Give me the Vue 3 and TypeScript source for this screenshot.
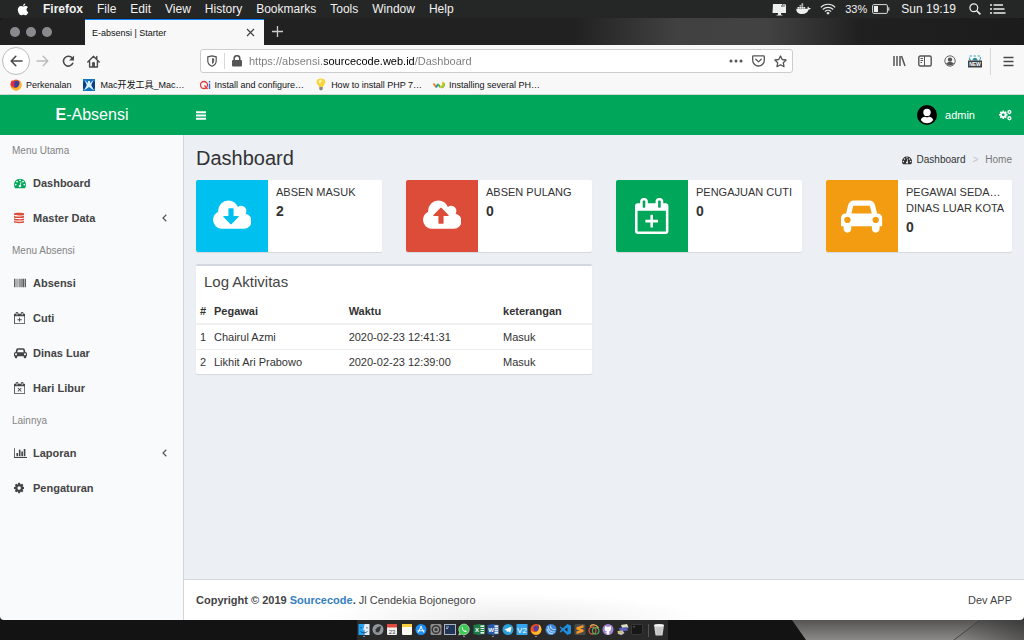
<script setup lang="ts">
import { ref } from 'vue'

interface Glyph {
  box: string
  d: string
}

const calendar =
  'M1536 256q52 0 90 38t38 90v1280q0 52-38 90t-90 38h-1408q-52 0-90-38t-38-90v-1280q0-52 38-90t90-38h128v-96q0-66 47-113t113-47h64q66 0 113 47t47 113v96h384v-96q0-66 47-113t113-47h64q66 0 113 47t47 113v96h128zm-384-96v288q0 14 9 23t23 9h64q14 0 23-9t9-23v-288q0-14-9-23t-23-9h-64q-14 0-23 9t-9 23zm-768 0v288q0 14 9 23t23 9h64q14 0 23-9t9-23v-288q0-14-9-23t-23-9h-64q-14 0-23 9t-9 23zm1152 1504v-1024h-1408v1024h1408z'
const cloud =
  'm640 288q0 159-112.5 271.5t-271.5 112.5h-1088q-185 0-316.5-131.5t-131.5-316.5q0-130 70-240t188-165q-2-30-2-43 0-212 150-362t362-150q156 0 285.5 87t188.5 231q71-62 166-62 106 0 181 75t75 181q0 76-41 138 130 31 213.5 135.5t83.5 238.5z'

const glyphs: Record<string, Glyph> = {
  dashboard: {
    box: '0 0 1792 1792',
    d: 'M384 1152q0-53-37.5-90.5t-90.5-37.5-90.5 37.5-37.5 90.5 37.5 90.5 90.5 37.5 90.5-37.5 37.5-90.5zm192-448q0-53-37.5-90.5t-90.5-37.5-90.5 37.5-37.5 90.5 37.5 90.5 90.5 37.5 90.5-37.5 37.5-90.5zm428 481l101-382q6-26-7.5-48.5t-38.5-29.5-48 6.5-30 39.5l-101 382q-60 5-107 43.5t-63 98.5q-20 77 20 146t117 89 146-20 89-117q16-60-6-117t-72-91zm660-33q0-53-37.5-90.5t-90.5-37.5-90.5 37.5-37.5 90.5 37.5 90.5 90.5 37.5 90.5-37.5 37.5-90.5zm-640-640q0-53-37.5-90.5t-90.5-37.5-90.5 37.5-37.5 90.5 37.5 90.5 90.5 37.5 90.5-37.5 37.5-90.5zm448 192q0-53-37.5-90.5t-90.5-37.5-90.5 37.5-37.5 90.5 37.5 90.5 90.5 37.5 90.5-37.5 37.5-90.5zm320 448q0 261-141 483-19 29-54 29h-1402q-35 0-54-29-141-221-141-483 0-182 71-348t191-286 286-191 348-71 348 71 286 191 191 286 71 348z'
  },
  database: {
    box: '0 0 1536 1792',
    d: 'M0 256C0 85 1536 85 1536 256V384C1536 555 0 555 0 384zM0 554C300 730 1236 730 1536 554V768C1536 939 0 939 0 768zM0 938C300 1114 1236 1114 1536 938V1152C1536 1323 0 1323 0 1152zM0 1322C300 1498 1236 1498 1536 1322V1536C1536 1707 0 1707 0 1536z'
  },
  barcode: {
    box: '0 0 1792 1792',
    d: 'M0 256h128v1280H0zM192 256h60v1280h-60zM320 256h60v1280h-60zM500 256h60v1280h-60zM700 256h130v1280H700zM900 256h60v1280h-60zM1030 256h60v1280h-60zM1150 256h130v1280h-130zM1350 256h130v1280h-130zM1540 256h60v1280h-60zM1664 256h128v1280h-128z'
  },
  calendarPlus: {
    box: '0 0 1664 1792',
    d: calendar + 'm-640-576h224q14 0 23 9t9 23v64q0 14-9 23t-23 9h-224v224q0 14-9 23t-23 9h-64q-14 0-23-9t-9-23v-224h-224q-14 0-23-9t-9-23v-64q0-14 9-23t23-9h224v-224q0-14 9-23t23-9h64q14 0 23 9t9 23z'
  },
  calendarTimes: {
    box: '0 0 1664 1792',
    d: calendar + 'M620 850L832 1060L1044 850L1134 940L922 1152L1134 1364L1044 1454L832 1242L620 1454L530 1364L742 1152L530 940z'
  },
  car: {
    box: '0 0 2048 1792',
    d: 'M480 1088q0-66-47-113t-113-47-113 47-47 113 47 113 113 47 113-47 47-113zm36-320h1016l-89-357q-2-8-14-17.5t-21-9.5h-768q-9 0-21 9.5t-14 17.5zm1372 320q0-66-47-113t-113-47-113 47-47 113 47 113 113 47 113-47 47-113zm160-96v384q0 14-9 23t-23 9h-96v128q0 80-56 136t-136 56-136-56-56-136v-128h-1024v128q0 80-56 136t-136 56-136-56-56-136v-128h-96q-14 0-23-9t-9-23v-384q0-93 65.5-158.5t158.5-65.5h28l105-419q23-94 104-157.5t179-63.5h768q98 0 179 63.5t104 157.5l105 419h28q93 0 158.5 65.5t65.5 158.5z'
  },
  chart: {
    box: '0 0 2048 1792',
    d: 'M640 896v512h-256v-512h256zm384-512v1024h-256v-1024h256zm1024 1152v128h-2048v-1536h128v1408h1920zm-640-896v768h-256v-768h256zm384-384v1152h-256v-1152h256z'
  },
  cog: {
    box: '128 0 1536 1792',
    d: 'M1152 896q0-106-75-181t-181-75-181 75-75 181 75 181 181 75 181-75 75-181zm512-109v222q0 12-8 23t-20 13l-185 28q-19 54-39 91 35 50 107 138 10 12 10 25t-9 23q-27 37-99 108t-94 71q-12 0-26-9l-138-108q-44 23-91 38-16 136-29 186-7 28-36 28h-222q-14 0-24.5-8.5t-11.5-21.5l-28-184q-49-16-90-37l-141 107q-10 9-25 9-14 0-25-11-126-114-165-168-7-10-7-23 0-12 8-23 15-21 51-66.5t54-70.5q-27-50-41-99l-183-27q-13-2-21-12.5t-8-23.5v-222q0-12 8-23t19-13l186-28q14-46 39-92-40-57-107-138-10-12-10-24 0-10 9-23 26-36 98.5-107.5t94.5-71.5q13 0 26 10l138 107q44-23 91-38 16-136 29-186 7-28 36-28h222q14 0 24.5 8.5t11.5 21.5l28 184q49 16 90 37l142-107q9-9 24-9 13 0 25 10 129 119 165 170 7 8 7 22 0 12-8 23-15 21-51 66.5t-54 70.5q26 50 41 98l183 28q13 2 21 12.5t8 23.5z'
  },
  cloudDown: {
    box: '0 0 1920 1792',
    d: 'M1280 928q0-14-9-23t-23-9h-224v-352q0-13-9.5-22.5t-22.5-9.5h-192q-13 0-22.5 9.5t-9.5 22.5v352h-224q-13 0-22.5 9.5t-9.5 22.5q0 14 9 23l352 352q9 9 23 9t23-9l351-351q10-12 10-24zm0-64' + cloud
  },
  cloudUp: {
    box: '0 0 1920 1792',
    d: 'M1280 864q0-14-9-23l-352-352q-9-9-23-9t-23 9l-351 351q-10 12-10 24 0 14 9 23t23 9h224v352q0 13 9.5 22.5t22.5 9.5h192q13 0 22.5-9.5t9.5-22.5v-352h224q13 0 22.5-9.5t9.5-22.5z' + cloud
  }
}

const appMenus = ['File', 'Edit', 'View', 'History', 'Bookmarks', 'Tools', 'Window', 'Help']
const address = ref('https://absensi.sourcecode.web.id/Dashboard')

interface Item {
  label: string
  icon: string
  tone?: string
  tree?: boolean
}
const sections: { title: string; items: Item[] }[] = [
  {
    title: 'Menu Utama',
    items: [
      { label: 'Dashboard', icon: 'dashboard', tone: 'green' },
      { label: 'Master Data', icon: 'database', tone: 'red', tree: true }
    ]
  },
  {
    title: 'Menu Absensi',
    items: [
      { label: 'Absensi', icon: 'barcode' },
      { label: 'Cuti', icon: 'calendarPlus' },
      { label: 'Dinas Luar', icon: 'car' },
      { label: 'Hari Libur', icon: 'calendarTimes' }
    ]
  },
  {
    title: 'Lainnya',
    items: [
      { label: 'Laporan', icon: 'chart', tree: true },
      { label: 'Pengaturan', icon: 'cog' }
    ]
  }
]

const cards = [
  { lines: ['Absen Masuk'], value: 2, icon: 'cloudDown', tone: 'aqua' },
  { lines: ['Absen Pulang'], value: 0, icon: 'cloudUp', tone: 'brick' },
  { lines: ['Pengajuan Cuti'], value: 0, icon: 'calendarPlus', tone: 'leaf' },
  { lines: ['Pegawai Seda…', 'Dinas Luar Kota'], value: 0, icon: 'car', tone: 'amber' }
]

const logs = [
  { name: 'Chairul Azmi', time: '2020-02-23 12:41:31', note: 'Masuk' },
  { name: 'Likhit Ari Prabowo', time: '2020-02-23 12:39:00', note: 'Masuk' }
]
</script>

<template>
  <div class="screen">
    <header class="menubar">
      <button class="apple" aria-label="Apple menu">
        <svg width="12" height="13" viewBox="0 0 12 13"><path fill="#fff" d="M8.3.4c.1 1.2-1 2.5-2.2 2.5C6 1.700 7.100.5 8.300.4zM6.200 3.500c.5 0 1.200-.6 2.300-.6 1 0 1.900.5 2.400 1.300-2 1.200-1.700 4 .4 4.800-.5 1.500-1.500 3.300-2.700 3.300-.9 0-1.200-.5-2.200-.5s-1.400.5-2.200.5C2.600 12.300.8 9.200.8 6.800c0-2.500 1.600-3.800 3.100-3.800 1 0 1.800.5 2.300.5z" /></svg>
      </button>
      <button class="current">Firefox</button>
      <button v-for="m in appMenus" :key="m">{{ m }}</button>
      <div class="status">
        <svg width="15" height="13" viewBox="0 0 15 13"><path fill="#eee" d="M1 1h9.500L9 3.500l3 .5 2-3v9H9v1.500l2 1H4l2-1V10H.5z" /><path fill="#aaa" d="M11 1h3l-2 3-2.500-.5z" /></svg>
        <svg width="15" height="12" viewBox="0 0 15 12"><path fill="#eee" d="M.3 5.800h10.500c.7 0 1-.6.7-1.600l.6-.7c.6.5.8 1 .9 1.500.7-.1 1.300 0 1.800.3-.4.9-1.100 1.200-2.100 1.200-1 2.800-3 4.600-6.500 4.600C2.500 11.100.2 9.500.3 5.800zM1.500 4h1.700v1.400H1.500zM3.500 4h1.700v1.400H3.500zM5.500 4h1.700v1.400H5.500zM7.500 4h1.700v1.400H7.500zM3.500 2.200h1.700v1.400H3.500zM5.500 2.200h1.700v1.400H5.500zM5.500.4h1.700v1.400H5.500z" /></svg>
        <svg width="16" height="12" viewBox="0 0 16 12"><g fill="none" stroke="#e6e6e6" stroke-width="1.200"><path d="M.8 4.300a10 10 0 0 1 14.400 0M2.800 6.500a7.200 7.200 0 0 1 10.400 0M4.900 8.600a4.400 4.400 0 0 1 6.200 0" /></g><path fill="#eee" d="M6.300 9.900a2.400 2.400 0 0 1 3.400 0L8 11.800z" /></svg>
        <span class="charge">33%</span>
        <svg width="18" height="10" viewBox="0 0 18 10"><rect x=".6" y=".6" width="14.800" height="8.800" rx="1.200" fill="none" stroke="#ddd" /><path fill="#eee" d="M2 2h4v6H2zM16.300 3.200h1v3.600h-1z" /></svg>
        <span class="clock">Sun 19:19</span>
        <svg width="12" height="12" viewBox="0 0 12 12"><g fill="none" stroke="#eee" stroke-width="1.200"><circle cx="4.800" cy="4.800" r="3.900" /><path d="M7.700 7.700l3.700 3.700" stroke-width="1.600" /></g></svg>
        <svg width="16" height="10" viewBox="0 0 16 10"><path stroke="#eee" stroke-width="1.500" d="M0 1h2M0 5h2M0 9h2M3.500 1H13M3.500 5h11M3.500 9h12" /></svg>
      </div>
    </header>

    <div class="window">
      <div class="tabstrip">
        <span class="lights"><i></i><i></i><i></i></span>
        <div class="tab">
          <span>E-absensi | Starter</span>
          <button aria-label="Close tab"><svg width="9" height="9" viewBox="0 0 9 9"><path stroke="#444" stroke-width="1.200" d="M1 1l7 7M8 1L1 8" /></svg></button>
        </div>
        <button class="newtab" aria-label="New tab"><svg width="11" height="11" viewBox="0 0 11 11"><path stroke="#ccc" stroke-width="1.300" d="M5.500 0v11M0 5.500h11" /></svg></button>
      </div>

      <div class="toolbar">
        <button class="back" aria-label="Back"><svg width="13" height="12" viewBox="0 0 13 12"><path fill="none" stroke="#484848" stroke-width="1.600" stroke-linecap="round" stroke-linejoin="round" d="M12 6H1.200M5.800 1.300L1.200 6l4.600 4.700" /></svg></button>
        <button aria-label="Forward"><svg width="13" height="12" viewBox="0 0 13 12"><path fill="none" stroke="#bbb" stroke-width="1.400" stroke-linecap="round" stroke-linejoin="round" d="M1 6h10.800M7.200 1.300L11.800 6l-4.600 4.700" /></svg></button>
        <button class="reload" aria-label="Reload"><svg width="13" height="12" viewBox="0 0 13 12"><path fill="none" stroke="#4a4a4a" stroke-width="1.600" d="M10.500 3.500A4.900 4.900 0 1 0 11 7.800" /><path fill="#4a4a4a" d="M12 .5v5H7z" /></svg></button>
        <button class="home" aria-label="Home"><svg width="13" height="13" viewBox="0 0 13 13"><g fill="none" stroke="#4a4a4a" stroke-width="1.400" stroke-linecap="round" stroke-linejoin="round"><path d="M.8 7L6.500 1.200 12.200 7M2.600 6.500V12h7.800V6.500M9.800 3.500V1.500" /></g><path fill="#4a4a4a" d="M5.100 12V8.300c0-1.600 2.800-1.600 2.800 0V12z" /></svg></button>
        <div class="urlbar">
          <svg width="10" height="12" viewBox="0 0 10 12"><path fill="none" stroke="#555" stroke-width="1.200" d="M5 .8l4.200 1V6c0 2.500-1.600 4.200-4.200 5.300C2.400 10.200.8 8.500.8 6V1.800z" /><path fill="#666" d="M5 3l2.200.5V6c0 1.300-.8 2.200-2.200 3z" /></svg>
          <i class="rule"></i>
          <svg width="10" height="12" viewBox="0 0 10 12"><path fill="none" stroke="#555" stroke-width="1.600" d="M2.200 6V3.500a2.800 2.800 0 0 1 5.600 0V6" /><rect y="5" width="10" height="6.500" rx="1" fill="#555" /></svg>
          <input v-model="address" aria-label="Address" type="text" spellcheck="false" />
          <button aria-label="Page actions"><svg width="14" height="4" viewBox="0 0 14 4"><g fill="#555"><circle cx="2" cy="2" r="1.500" /><circle cx="7" cy="2" r="1.500" /><circle cx="12" cy="2" r="1.500" /></g></svg></button>
          <button aria-label="Save to Pocket"><svg width="13" height="12" viewBox="0 0 13 12"><g fill="none" stroke="#555" stroke-width="1.300" stroke-linecap="round" stroke-linejoin="round"><path d="M1.500.8h10c.5 0 .8.3.8.8v3.600a5.800 5.800 0 0 1-11.600 0V1.600c0-.5.3-.8.800-.8z" /><path d="M3.800 4.300l2.700 2.600 2.700-2.600" /></g></svg></button>
          <button aria-label="Bookmark this page"><svg width="13" height="13" viewBox="0 0 13 13"><path fill="none" stroke="#555" stroke-width="1.300" stroke-linejoin="round" d="M6.500 1l1.700 3.500 3.900.5-2.800 2.700.7 3.900-3.500-1.900L3 11.600l.7-3.900L.9 5l3.900-.5z" /></svg></button>
        </div>
        <div class="tools">
          <button aria-label="Library"><svg width="13" height="12" viewBox="0 0 13 12"><path stroke="#555" stroke-width="1.500" d="M1 1v10M4 1v10M7 1v10M8.500 1l3.500 10" /></svg></button>
          <button aria-label="Sidebars"><svg width="14" height="12" viewBox="0 0 14 12"><rect x=".8" y="1" width="12.400" height="10" rx="1.500" fill="none" stroke="#555" stroke-width="1.400" /><path stroke="#555" d="M6.500 1v10M2.500 3.500H5M2.500 5.500H5M2.500 7.500H4" /></svg></button>
          <button aria-label="Account"><svg width="12" height="12" viewBox="0 0 12 12"><circle cx="6" cy="6" r="5.200" fill="none" stroke="#666" /><circle cx="6" cy="4.600" r="2.200" fill="#555" /><path fill="#555" d="M2 8.600c1.500-2.300 6.500-2.300 8 0-1.800 2.500-6.200 2.500-8 0z" /></svg></button>
          <button aria-label="New feature"><svg width="14" height="13" viewBox="0 0 14 13"><path fill="none" stroke="#49a9b5" stroke-width="1.200" stroke-dasharray="2.500 1.500" d="M1.500 5V1h11v4" /><path fill="#2e8c9c" d="M4.500 5.500c0-3.600 5-3.600 5 0zM2 4.500h1v1H2zM11 4.500h1v1h-1z" /><rect y="5.500" width="14" height="7" fill="#3c4146" /><text x="7" y="11" font-size="5" font-weight="700" text-anchor="middle" fill="#fff">NEW</text></svg></button>
          <i class="rule tall"></i>
          <button aria-label="Open menu"><svg width="11" height="11" viewBox="0 0 11 11"><path stroke="#484848" stroke-width="1.500" d="M.5 1.500h10M.5 5.500h10M.5 9.500h10" /></svg></button>
        </div>
      </div>

      <nav class="bookmarks" aria-label="Bookmarks">
        <a href="#">
          <svg width="12" height="12" viewBox="0 0 12 12"><circle cx="6" cy="6" r="5.400" fill="#f25a1e" /><circle cx="6.600" cy="5.200" r="3.400" fill="#3b3fa0" /><path fill="#ffb52b" d="M9 .8c3.500 2.700 3.400 7.800.3 9.800C6 12.500 1.500 11 .8 7c2 2.500 5 2.600 6.700 1.200C9.500 6.500 10 4 9 .8z" /><path fill="#e52b3c" d="M.7 6.500C.2 4 1.200 2 2.300 1l.4 1.600L5 3 3.800 5l1.400 1.500-2 .8z" /></svg>
          Perkenalan
        </a>
        <a href="#">
          <svg width="12" height="12" viewBox="0 0 12 12"><rect width="12" height="12" fill="#1673bd" /><path fill="#0b3f85" d="M0 3l2-1 2 4-2 4-2-1zM12 3l-2-1-2 4 2 4 2-1z" /><path fill="#d9f1ff" d="M1.500 1L5 4.200V2h2v2.200L10.500 1 8.200 6l2.800 5.500L6 8l-5 3.500L3.800 6z" /></svg>
          <span class="indent">Mac开发工具_Mac…</span>
        </a>
        <a href="#">
          <svg width="12" height="12" viewBox="0 0 12 12"><circle cx="5" cy="6" r="3.500" fill="none" stroke="#e13a3a" stroke-width="1.300" /><path stroke="#e13a3a" stroke-width="1.300" d="M5.500 6.500l3 3.500" /><path stroke="#3c62c8" stroke-width="1.400" d="M10.500 4.500V10M10.500 2v1.500" /></svg>
          Install and configure…
        </a>
        <a href="#">
          <svg width="12" height="13" viewBox="0 0 12 13"><path fill="#f8d43a" d="M6 .5c5.500 0 5 4.700 3 6.500L7.800 9H4.200L3 7C1 5.200.5.500 6 .5z" /><path fill="#fff4a8" d="M4.500 2c1.500-1 2.500 0 2 2L5 6C3.500 5 3.300 3 4.500 2z" /><path fill="#888" d="M4.300 9h3.400v2.500L6 12.500l-1.700-1z" /></svg>
          How to install PHP 7…
        </a>
        <a href="#">
          <svg width="12" height="12" viewBox="0 0 12 12"><g fill="none" stroke-width="1.800"><path stroke="#ef7a2a" d="M.5 4.500L3 8" /><path stroke="#2a8fb5" d="M3 8.500l2-3.500" /><path stroke="#5cb531" d="M5 5l2.500 3.500" /><path stroke="#e7c51d" d="M7.500 8.500C10 7 10.500 5 9.500 3" /><path stroke="#8cc63e" d="M8.500 8.500c3 0 3-3 2.500-4.500" /></g></svg>
          Installing several PH…
        </a>
      </nav>

      <div class="page">
        <header class="topbar">
          <a class="brand" href="#"><b>E</b>-Absensi</a>
          <button class="burger" aria-label="Toggle navigation"><svg width="10" height="9" viewBox="0 0 10 9"><path stroke="#fff" stroke-width="2" d="M0 1.200h10M0 4.500h10M0 7.800h10" /></svg></button>
          <div class="account">
            <a class="user" href="#">
              <svg width="20" height="20" viewBox="0 0 20 20"><circle cx="10" cy="10" r="10" fill="#000" /><circle cx="10" cy="7.400" r="3.700" fill="#fff" /><path fill="#fff" d="M3.800 15c.6-2.500 2.600-3.200 4.300-3.200 1.200.7 2.600.7 3.800 0 1.700 0 3.700.7 4.300 3.200-1.300 2-3.600 3.300-6.200 3.300S5.100 17 3.800 15z" /></svg>
              admin
            </a>
            <button aria-label="Settings">
              <svg width="13" height="12" viewBox="0 0 1920 1792" fill="#fff" fill-rule="evenodd">
                <path :d="glyphs.cog.d" transform="translate(-104 128) scale(.82)" />
                <path :d="glyphs.cog.d" transform="translate(1150 50) scale(.44)" />
                <path :d="glyphs.cog.d" transform="translate(1150 980) scale(.44)" />
              </svg>
            </button>
          </div>
        </header>

        <div class="body">
          <aside class="sidebar">
            <nav v-for="s in sections" :key="s.title" :aria-label="s.title">
              <h2>{{ s.title }}</h2>
              <a v-for="i in s.items" :key="i.label" href="#">
                <span class="slot"><svg :class="i.tone" height="12" :viewBox="glyphs[i.icon].box"><path :d="glyphs[i.icon].d" /></svg></span>
                <span class="label">{{ i.label }}</span>
                <svg v-if="i.tree" width="5" height="8" viewBox="0 0 5 8"><path fill="none" stroke="#555" stroke-width="1.200" d="M4.300.8L1 4l3.300 3.200" /></svg>
              </a>
            </nav>
          </aside>

          <div class="main">
            <main>
              <div class="heading">
                <h1>Dashboard</h1>
                <nav class="crumbs" aria-label="Breadcrumb">
                  <a href="#"><svg width="10" height="10" :viewBox="glyphs.dashboard.box"><path :d="glyphs.dashboard.d" /></svg>Dashboard</a>
                  <i>&gt;</i>
                  <span>Home</span>
                </nav>
              </div>

              <section class="cards">
                <article v-for="c in cards" :key="c.lines[0]" class="card">
                  <span class="tile" :class="c.tone"><svg height="36" :viewBox="glyphs[c.icon].box"><path :d="glyphs[c.icon].d" /></svg></span>
                  <div class="info">
                    <p v-for="l in c.lines" :key="l">{{ l }}</p>
                    <strong>{{ c.value }}</strong>
                  </div>
                </article>
              </section>

              <section class="box">
                <h3>Log Aktivitas</h3>
                <table>
                  <thead>
                    <tr><th class="num">#</th><th class="who">Pegawai</th><th class="when">Waktu</th><th>keterangan</th></tr>
                  </thead>
                  <tbody>
                    <tr v-for="(l, n) in logs" :key="l.time">
                      <td>{{ n + 1 }}</td><td>{{ l.name }}</td><td>{{ l.time }}</td><td>{{ l.note }}</td>
                    </tr>
                  </tbody>
                </table>
              </section>
            </main>

            <footer class="foot">
              <span><b>Copyright © 2019 <a href="#">Sourcecode</a>.</b> Jl Cendekia Bojonegoro</span>
              <span>Dev APP</span>
            </footer>
          </div>
        </div>
      </div>
    </div>

    <div class="desktop">
      <svg class="wallpaper" viewBox="0 0 1024 20" preserveAspectRatio="none">
        <defs>
          <linearGradient id="stone" x1="0" y1="0" x2="0" y2="1"><stop offset="0" stop-color="#555453" /><stop offset="1" stop-color="#8b8988" /></linearGradient>
          <linearGradient id="edge" x1="0" y1="0" x2="1" y2="0"><stop offset="0" stop-color="#222" stop-opacity="0" /><stop offset="1" stop-color="#222" stop-opacity=".5" /></linearGradient>
        </defs>
        <rect width="1024" height="20" fill="#131313" />
        <path d="M792 0h232v20H806z" fill="url(#stone)" />
        <path d="M980 0L954 20" stroke="#444" />
        <path d="M980 0h44v20h-70z" fill="url(#edge)" />
      </svg>
      <div class="dock">
        <div class="apps">
          <svg viewBox="0 0 12 14"><path fill="#23a3f5" d="M.5 1h6L5 7h1.500V12h-6z" /><path fill="#e3edf5" d="M6.500 1h5v11h-5V7H5z" /><path fill="none" stroke="#123a66" stroke-width=".8" d="M3 4v1.500M9 4v1.500M2.500 8.500c2 1.800 5 1.800 7 0" /><circle cx="6" cy="13.400" r=".6" fill="#ddd" /></svg>
          <svg viewBox="0 0 12 14"><circle cx="6" cy="6.500" r="5.500" fill="#909699" /><path fill="#30353a" d="M9 3L5.500 4.200 3 7l1 .5-.5 2 2-.5.5 1L8 7.500z" /></svg>
          <svg viewBox="0 0 12 14"><rect x="1" y="1" width="10" height="11" rx="1" fill="#f2f0ee" /><path fill="#e2493f" d="M1 1h10v3.500H1z" /><text x="6" y="10.500" font-size="6" text-anchor="middle" fill="#444">23</text></svg>
          <svg viewBox="0 0 12 14"><rect x="1" y="1" width="10" height="11" rx="1" fill="#fbfaf0" /><path fill="#f7cf3f" d="M1 1h10v3H1z" /></svg>
          <svg viewBox="0 0 12 14"><circle cx="6" cy="6.500" r="5.500" fill="#1c8df2" /><path stroke="#e8f6ff" stroke-width="1.100" d="M6.500 3L3 9.500M5.500 3L9 9.500M2.500 7.800h7" /></svg>
          <svg viewBox="0 0 12 14"><rect x=".5" y="1" width="11" height="11" rx="1.500" fill="#8e8e8e" /><circle cx="6" cy="6.500" r="3.800" fill="none" stroke="#333" stroke-width="1.400" /><circle cx="6" cy="6.500" r="1.500" fill="#333" /></svg>
          <svg viewBox="0 0 12 14"><rect x=".5" y="1.500" width="11" height="10" fill="#22365a" stroke="#a8b4c2" /><path stroke="#d5dce5" stroke-width=".7" d="M2 4h3M2 5.500h2" /></svg>
          <svg viewBox="0 0 12 14"><path fill="#3bc953" stroke="#dff5e2" stroke-width=".6" d="M6 1a5.400 5.400 0 1 1-2.600 10.200L.8 12l.8-2.700A5.400 5.400 0 0 1 6 1z" /><path fill="#fff" d="M4 3.500l1.200 1.700-.6.8 1.800 1.800.8-.6 1.600 1.100C8 10.500 3 7.500 4 3.500z" /><circle cx="6" cy="13.400" r=".6" fill="#ddd" /></svg>
          <svg viewBox="0 0 12 14"><path fill="#e4efe8" stroke="#218452" stroke-width=".6" d="M6 2h5.500v9H6z" /><path stroke="#218452" d="M7 4.500h4M7 6.500h4M7 8.500h4" /><path fill="#1d7b49" d="M.5 2L7.500.8v11.400L.5 11z" /><text x="4" y="9" font-size="6" font-weight="700" text-anchor="middle" fill="#fff">X</text></svg>
          <svg viewBox="0 0 12 14"><path fill="#e3ebf5" stroke="#2b5eaa" stroke-width=".6" d="M6 2h5.500v9H6z" /><path stroke="#789ac9" d="M7 4.500h4M7 6.500h4M7 8.500h4" /><path fill="#2459a8" d="M.5 2L7.500.8v11.400L.5 11z" /><text x="4" y="9" font-size="6" font-weight="700" text-anchor="middle" fill="#fff">W</text><circle cx="6" cy="13.400" r=".6" fill="#ddd" /></svg>
          <svg viewBox="0 0 12 14"><circle cx="6" cy="6.500" r="5.500" fill="#2a9fdb" /><path fill="#fff" d="M2.300 6.400L9.500 3.700 8.300 9.700 6 8.200l-1 1L4.600 7.400z" /></svg>
          <svg viewBox="0 0 12 14"><rect x=".5" y="1" width="11" height="11" fill="#35a6ee" /><text x="6" y="9.500" font-size="8" text-anchor="middle" fill="#fff">V2</text></svg>
          <svg viewBox="0 0 12 14"><circle cx="6" cy="6.500" r="5.500" fill="#f4511e" /><circle cx="6.500" cy="5.500" r="3" fill="#5b3ba6" /><path fill="#ffc02b" d="M8.500 1c3.700 2.700 3.700 7.500.8 9.700C6 13 1.500 11 1 7.500c2 2 4.500 2.200 6 1C9 7 9.500 4 8.500 1z" /><circle cx="6" cy="13.400" r=".6" fill="#ddd" /></svg>
          <svg viewBox="0 0 12 14"><circle cx="6" cy="6.500" r="5.500" fill="#3b86d8" /><path fill="none" stroke="#b9dbf7" stroke-width="1.100" d="M3 3c0 4 3 6.500 7 6M5.500 2.500C5 5 7.500 7 10.500 6.500M2 6c1 3 3.500 5 6 4.500" /></svg>
          <svg viewBox="0 0 12 14"><path fill="#1f8fe0" d="M8.500 1L12 2.500v8L8.500 12 3.800 7.800 1.500 9.500.5 9l2-2.500L.5 4l1-.5L3.800 5.200zM8.500 4.200L5.500 6.500l3 2.300z" fill-rule="evenodd" /></svg>
          <svg viewBox="0 0 12 14"><rect x=".5" y="1" width="11" height="11" rx="1.500" fill="#4b4b4b" /><path fill="#fb9b22" d="M2.500 4.300L9.500 2v2.500L6 5.600l3.500 1.200v2L2.500 11V8.600l3.300-1-3.300-1.200z" /></svg>
          <svg viewBox="0 0 12 14"><g fill="none" stroke-width="1.300"><circle cx="4.500" cy="7.500" r="3.500" stroke="#d45b3d" /><circle cx="7.700" cy="7.800" r="3.200" stroke="#49a860" /><path stroke="#e9ae55" d="M2 3.500c2-2.500 6-2.500 8.500 1.500" /></g></svg>
          <svg viewBox="0 0 12 14"><circle cx="6" cy="6.500" r="5.500" fill="#a183cf" /><path fill="#fff" d="M3.200 3l1.500.8h2.600L8.800 3l.3 2.500c0 2-1 2.700-2 2.900l.2 3.100H4.700l.1-1.300-1.600-.6 1.600-.3V8.400c-1.500-.3-2.200-1.200-2-2.900z" /></svg>
          <svg viewBox="0 0 12 14"><path fill="#e2ddc5" d="M4 2l6-1 1.500 3.500-6 1.500z" /><path fill="#5962b8" d="M2 5l8-1 1 3.500-8 1z" /><path fill="#c6c6c6" d="M.5 8l5-.5 2 2.500-3 2-3.500-1z" /><path fill="#e2b82d" d="M1 8.500h4v1.200H1z" /></svg>
          <svg viewBox="0 0 12 14"><rect x=".5" y="1.500" width="11" height="10" rx=".8" fill="#171717" stroke="#444" stroke-width=".7" /><path stroke="#aaa" stroke-width=".6" d="M2 3.800h2" /></svg>
        </div>
        <i class="split"></i>
        <svg viewBox="0 0 12 14"><path fill="#cfcfcf" d="M1 2h10L9.500 12.500h-7z" /><ellipse cx="6" cy="2.300" rx="5" ry="1.300" fill="#f3f3f3" /><path stroke="#aaa" stroke-width=".5" d="M4 4.500l.5 7M6 4.500v7M8 4.500l-.5 7" /></svg>
      </div>
    </div>
  </div>
</template>

<style>
body {
  margin: 0;
}
</style>

<style scoped>
.screen {
  display: flex;
  flex-direction: column;
  min-height: 100vh;
  background: #161616;
  color: #333;
  font: 11px/16px "Liberation Sans", "Noto Sans CJK SC", Arial, sans-serif;
}
.screen * {
  box-sizing: border-box;
}
svg {
  display: block;
  flex: none;
  fill: currentColor;
  fill-rule: evenodd;
}
button {
  display: flex;
  align-items: center;
  padding: 0;
  border: 0;
  background: none;
  color: inherit;
  font: inherit;
}
a {
  color: inherit;
  text-decoration: none;
}
h1, h2, h3, p {
  margin: 0;
  font-weight: 400;
}

.menubar {
  display: flex;
  align-items: center;
  gap: 14px;
  height: 18px;
  padding: 0 18px 0 17px;
  background: #252626;
  color: #f2f2f2;
  font-size: 12px;
}
.current {
  font-weight: 700;
}
.status {
  display: flex;
  align-items: center;
  gap: 9px;
  margin-left: auto;
}
.charge {
  margin-right: -4px;
  font-size: 11px;
}
.clock {
  margin: 0 4px 0 2px;
}

.window {
  display: flex;
  flex: 1;
  flex-direction: column;
  overflow: hidden;
  border-radius: 4px;
}
.tabstrip {
  display: flex;
  height: 27px;
  padding-left: 10px;
  background: linear-gradient(90deg, #212122 56%, #414141 66%, #424242 75%, #202020 84%, #1c1c1c);
}
.lights {
  display: flex;
  align-items: center;
  gap: 6px;
  width: 75px;
}
.lights i {
  width: 10px;
  height: 10px;
  border-radius: 50%;
  background: #8b898e;
}
.tab {
  display: flex;
  align-items: center;
  justify-content: space-between;
  width: 179px;
  margin-top: 1px;
  padding: 0 9px 0 7px;
  border-top: 1px solid #0a84ff;
  background: #f8f8f9;
  color: #111;
  font-size: 9px;
}
.newtab {
  padding: 0 8px;
}

.toolbar {
  display: flex;
  align-items: center;
  height: 32px;
  padding: 0 10px 0 2px;
  background: #f8f8f9;
}
.back {
  justify-content: center;
  width: 28px;
  height: 28px;
  margin-right: 6px;
  border: 1px solid #bcbcbc;
  border-radius: 50%;
  background: #fff;
}
.reload {
  margin: 0 12px 0 13px;
}
.urlbar {
  display: flex;
  align-items: center;
  gap: 7px;
  flex: 1;
  height: 24px;
  margin: 0 100px;
  padding: 0 5px 0 6px;
  border: 1px solid #ccc;
  border-radius: 3px;
  background: #fff;
}
.rule {
  width: 1px;
  height: 16px;
  background: #d7d7d7;
}
.rule.tall {
  height: 27px;
}
.urlbar input {
  flex: 1;
  min-width: 0;
  padding: 0;
  border: 0;
  outline: 0;
  background: linear-gradient(90deg, #7a7a7a 75px, #000 75px, #000 166px, #7a7a7a 166px);
  -webkit-background-clip: text;
  background-clip: text;
  color: transparent;
  font: inherit;
}
.urlbar button {
  margin-left: 2px;
}
.tools {
  display: flex;
  align-items: center;
  gap: 12px;
}
.tools .rule {
  margin: 0 0 0 -4px;
}

.bookmarks {
  display: flex;
  align-items: center;
  gap: 11px;
  height: 18px;
  padding: 0 10px 2px;
  border-bottom: 1px solid #cfd6d2;
  background: #f8f8f9;
  color: #111;
  font-size: 9px;
}
.bookmarks a {
  display: flex;
  align-items: center;
  gap: 4px;
  white-space: nowrap;
}
.indent {
  padding: 0 3px 0 2px;
}

.page {
  display: flex;
  flex: 1;
  flex-direction: column;
}
.topbar {
  display: flex;
  align-items: center;
  height: 40px;
  padding-right: 12px;
  background: #00a65a;
  color: #fff;
}
.brand {
  width: 184px;
  font-size: 16px;
  text-align: center;
}
.burger {
  margin-left: 12px;
}
.account {
  display: flex;
  align-items: center;
  gap: 24px;
  margin-left: auto;
}
.user {
  display: flex;
  align-items: center;
  gap: 8px;
}

.body {
  display: flex;
  flex: 1;
}
.sidebar {
  width: 184px;
  border-right: 1px solid #d2d6de;
  background: #f9fafc;
}
.sidebar h2 {
  padding: 8px 12px 6px;
  color: #848484;
  font-size: 10px;
}
.sidebar a {
  display: flex;
  align-items: center;
  height: 35px;
  padding: 0 16px 0 14px;
  color: #444;
  font-weight: 700;
}
.slot {
  width: 19px;
}
.slot svg {
  max-width: 13px;
}
.label {
  flex: 1;
}
.green {
  color: #00a65a;
}
.red {
  color: #dd4b39;
}

.main {
  display: flex;
  flex: 1;
  flex-direction: column;
  min-width: 0;
}
main {
  flex: 1;
  padding: 12px;
  background: #ecf0f5;
}
.heading {
  display: flex;
  align-items: flex-start;
  justify-content: space-between;
  height: 24px;
  margin-bottom: 9px;
}
h1 {
  font-size: 20px;
  line-height: 22px;
}
.crumbs {
  display: flex;
  align-items: center;
  gap: 7px;
  padding-top: 5px;
  font-size: 10px;
}
.crumbs a {
  display: flex;
  align-items: center;
  gap: 5px;
}
.crumbs i {
  color: #c4c4c4;
  font-style: normal;
}
.crumbs span {
  color: #777;
}
.cards {
  display: grid;
  grid-template-columns: repeat(4, minmax(0, 1fr));
  gap: 24px;
}
.card {
  display: flex;
  min-height: 72px;
  overflow: hidden;
  border-radius: 2px;
  background: #fff;
  box-shadow: 0 1px 1px rgba(0, 0, 0, .1);
}
.tile {
  display: flex;
  flex: none;
  align-items: center;
  justify-content: center;
  width: 72px;
  color: #fff;
}
.aqua { background: #00c0ef; }
.brick { background: #dd4b39; }
.leaf { background: #00a65a; }
.amber { background: #f39c12; }
.info {
  padding: 4px 0 4px 8px;
}
.info p {
  text-transform: uppercase;
  white-space: nowrap;
}
.info strong {
  display: block;
  font-size: 14px;
  line-height: 22px;
}
.box {
  width: calc(50% - 12px);
  margin-top: 12px;
  border-top: 2px solid #d2d6de;
  border-radius: 2px;
  background: #fff;
  box-shadow: 0 1px 1px rgba(0, 0, 0, .1);
}
h3 {
  padding: 8px 8px 9px;
  color: #444;
  font-size: 15px;
}
table {
  width: 100%;
  border-collapse: collapse;
  table-layout: fixed;
}
th, td {
  padding: 4px;
  text-align: left;
}
th {
  border-bottom: 2px solid #f0f0f0;
}
td {
  border-top: 1px solid #eee;
}
.num { width: 14px; }
.who { width: 34%; }
.when { width: 39%; }

.foot {
  display: flex;
  justify-content: space-between;
  padding: 12px;
  border-top: 1px solid #d2d6de;
  background: radial-gradient(190px 26px at 39% 100%, #ececec, #fff);
  color: #444;
}
.foot a {
  color: #3580bd;
}

.desktop {
  display: flex;
  position: relative;
  justify-content: center;
  height: 20px;
}
.wallpaper {
  position: absolute;
  inset: 0;
  width: 100%;
  height: 100%;
}
.dock {
  display: flex;
  position: relative;
  align-items: center;
  padding: 0 3px 0 1px;
  background: #292929;
}
.dock svg {
  width: 12px;
  height: 14px;
}
.apps {
  display: flex;
  justify-content: space-between;
  width: 286px;
}
.split {
  width: 1px;
  height: 13px;
  margin: 0 4px;
  background: #555;
}
</style>
